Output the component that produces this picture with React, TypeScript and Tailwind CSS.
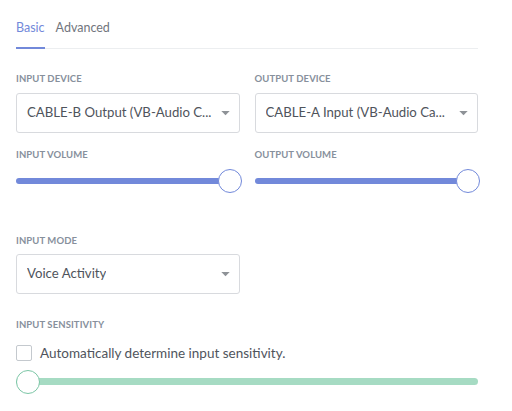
import React from "react";

const Label = ({ children }: { children: React.ReactNode }) => (
  <div className="text-[9.5px] font-bold uppercase tracking-[0.01em] text-[#87909c] leading-none">
    {children}
  </div>
);

const Select = ({ value }: { value: string }) => (
  <div className="flex h-10 items-center justify-between rounded-[3px] border border-[#d8dade] bg-white pl-[10px] pr-[9px]">
    <span className="truncate text-[13.2px] text-[#4f545c]">{value}</span>
    <svg width="9" height="5" viewBox="0 0 10 6" className="ml-[4px] shrink-0">
      <path d="M0 0h10L5 5z" fill="#8e9297" />
    </svg>
  </div>
);

const Slider = ({ color, value }: { color: string; value: number }) => (
  <div className="relative h-6">
    <div
      className="absolute left-0 top-[9px] h-[6px] rounded-full"
      style={{ background: color, width: `${value}%` }}
    />
    <div
      className="absolute top-0 h-6 w-6 -translate-x-1/2 rounded-full border bg-white"
      style={{ left: `${value}%`, borderColor: color }}
    />
  </div>
);

export default function App() {
  return (
    <div className="h-[411px] w-[512px] bg-white font-['Lato','Open_Sans',sans-serif]">
      <div className="w-[478px] pl-4 pt-[19px]">
        {/* tabs */}
        <div className="flex border-b border-[#eceef0] text-[12.5px]">
          <div className="-mb-px border-b-2 border-[#7289da] pb-[9px] text-[#7289da]">
            Basic
          </div>
          <div className="ml-[11px] pb-[9px] text-[#72767d]">Advanced</div>
        </div>

        <div className="mt-[25px] grid grid-cols-2 gap-x-[15px]">
          <div>
            <Label>Input Device</Label>
            <div className="mt-[10px]">
              <Select value="CABLE-B Output (VB-Audio C..." />
            </div>
            <div className="mt-[17px]">
              <Label>Input Volume</Label>
            </div>
            <div className="mt-[9px] mr-[10px]">
              <Slider color="#7289da" value={100} />
            </div>
          </div>
          <div>
            <Label>Output Device</Label>
            <div className="mt-[10px]">
              <Select value="CABLE-A Input (VB-Audio Ca..." />
            </div>
            <div className="mt-[17px]">
              <Label>Output Volume</Label>
            </div>
            <div className="mt-[9px] mr-[10px]">
              <Slider color="#7289da" value={100} />
            </div>
          </div>
        </div>

        <div className="mt-[43px] w-[224px]">
          <Label>Input Mode</Label>
          <div className="mt-[9px]">
            <Select value="Voice Activity" />
          </div>
        </div>

        <div className="mt-[26px]">
          <Label>Input Sensitivity</Label>
          <div className="mt-[13px] flex items-center gap-2">
            <div className="h-4 w-4 rounded-[2px] border border-[#c4c9ce] bg-white" />
            <span className="text-[13.5px] text-[#4f545c]">
              Automatically determine input sensitivity.
            </span>
          </div>
          <div className="mt-[7px]">
            <div className="relative h-6">
              <div className="absolute left-0 right-0 top-[8px] h-[7px] rounded-full bg-[#a6dbc3]" />
              <div className="absolute left-0 top-0 h-6 w-6 rounded-full border border-[#7cc6a6] bg-white" />
            </div>
          </div>
        </div>
      </div>
    </div>
  );
}
